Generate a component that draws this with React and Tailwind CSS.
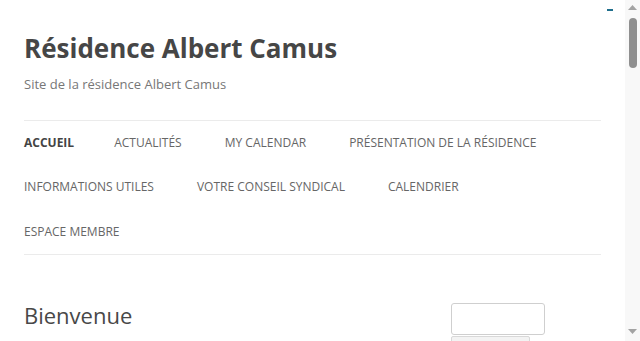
import React from 'react';

const menu = [
  ['ACCUEIL', true],
  ['ACTUALITÉS'],
  ['MY CALENDAR'],
  ['PRÉSENTATION DE LA RÉSIDENCE'],
  ['INFORMATIONS UTILES'],
  ['VOTRE CONSEIL SYNDICAL'],
  ['CALENDRIER'],
  ['ESPACE MEMBRE'],
];

const Scrollbar = () => (
  <div className="flex w-[15px] shrink-0 flex-col items-center bg-[#f8f8f8]">
    <svg width="9" height="5" viewBox="0 0 9 5" className="mt-[5px]">
      <path d="M0 5 L4.5 0 L9 5 Z" fill="#a3a3a3" />
    </svg>
    <div className="mt-[8px] h-[50px] w-[8px] rounded-full bg-[#8f8f8f]" />
    <div className="flex-1" />
    <svg width="9" height="5" viewBox="0 0 9 5" className="mb-[7px]">
      <path d="M0 0 L9 0 L4.5 5 Z" fill="#a3a3a3" />
    </svg>
  </div>
);

export default function App() {
  return (
    <div
      className="flex h-[341px] w-full overflow-hidden bg-white"
      style={{ fontFamily: '"Open Sans", "Liberation Sans", sans-serif' }}
    >
      <div className="relative flex-1 px-6">
        <span className="absolute left-[607px] top-[9px] h-[2px] w-[6px] bg-[#1f6e8c]" />

        <header className="pt-[35px]">
          <h1 className="text-[26px] font-bold leading-[26px] text-[#464646]">
            Résidence Albert Camus
          </h1>
          <p className="mt-[13px] text-[13px] leading-[20px] text-[#777]">
            Site de la résidence Albert Camus
          </p>
        </header>

        <nav className="mt-[26px] border-y border-[#ebebeb]">
          <ul className="flex flex-wrap">
            {menu.map(([label, active]) => (
              <li
                key={label}
                className={`text-[12px] leading-[44.4px] ${
                  active ? 'mr-[40px] font-bold text-[#444]' : 'mr-[43px] text-[#666]'
                }`}
              >
                {label}
              </li>
            ))}
          </ul>
        </nav>

        <div className="mt-[48px] flex">
          <main className="flex-1">
            <h2 className="text-[22px] leading-[24px] text-[#484848]">Bienvenue</h2>
          </main>
          <aside className="mr-[56px] w-[94px]">
            <input
              type="text"
              className="block h-[32px] w-[94px] rounded-[3px] border border-[#cfcfcf] bg-white"
            />
            <div className="mt-[1px] h-[20px] w-[79px] rounded-[2px] border border-[#d8d8d8] bg-[#f3f3f3]" />
          </aside>
        </div>
      </div>
      <Scrollbar />
    </div>
  );
}
